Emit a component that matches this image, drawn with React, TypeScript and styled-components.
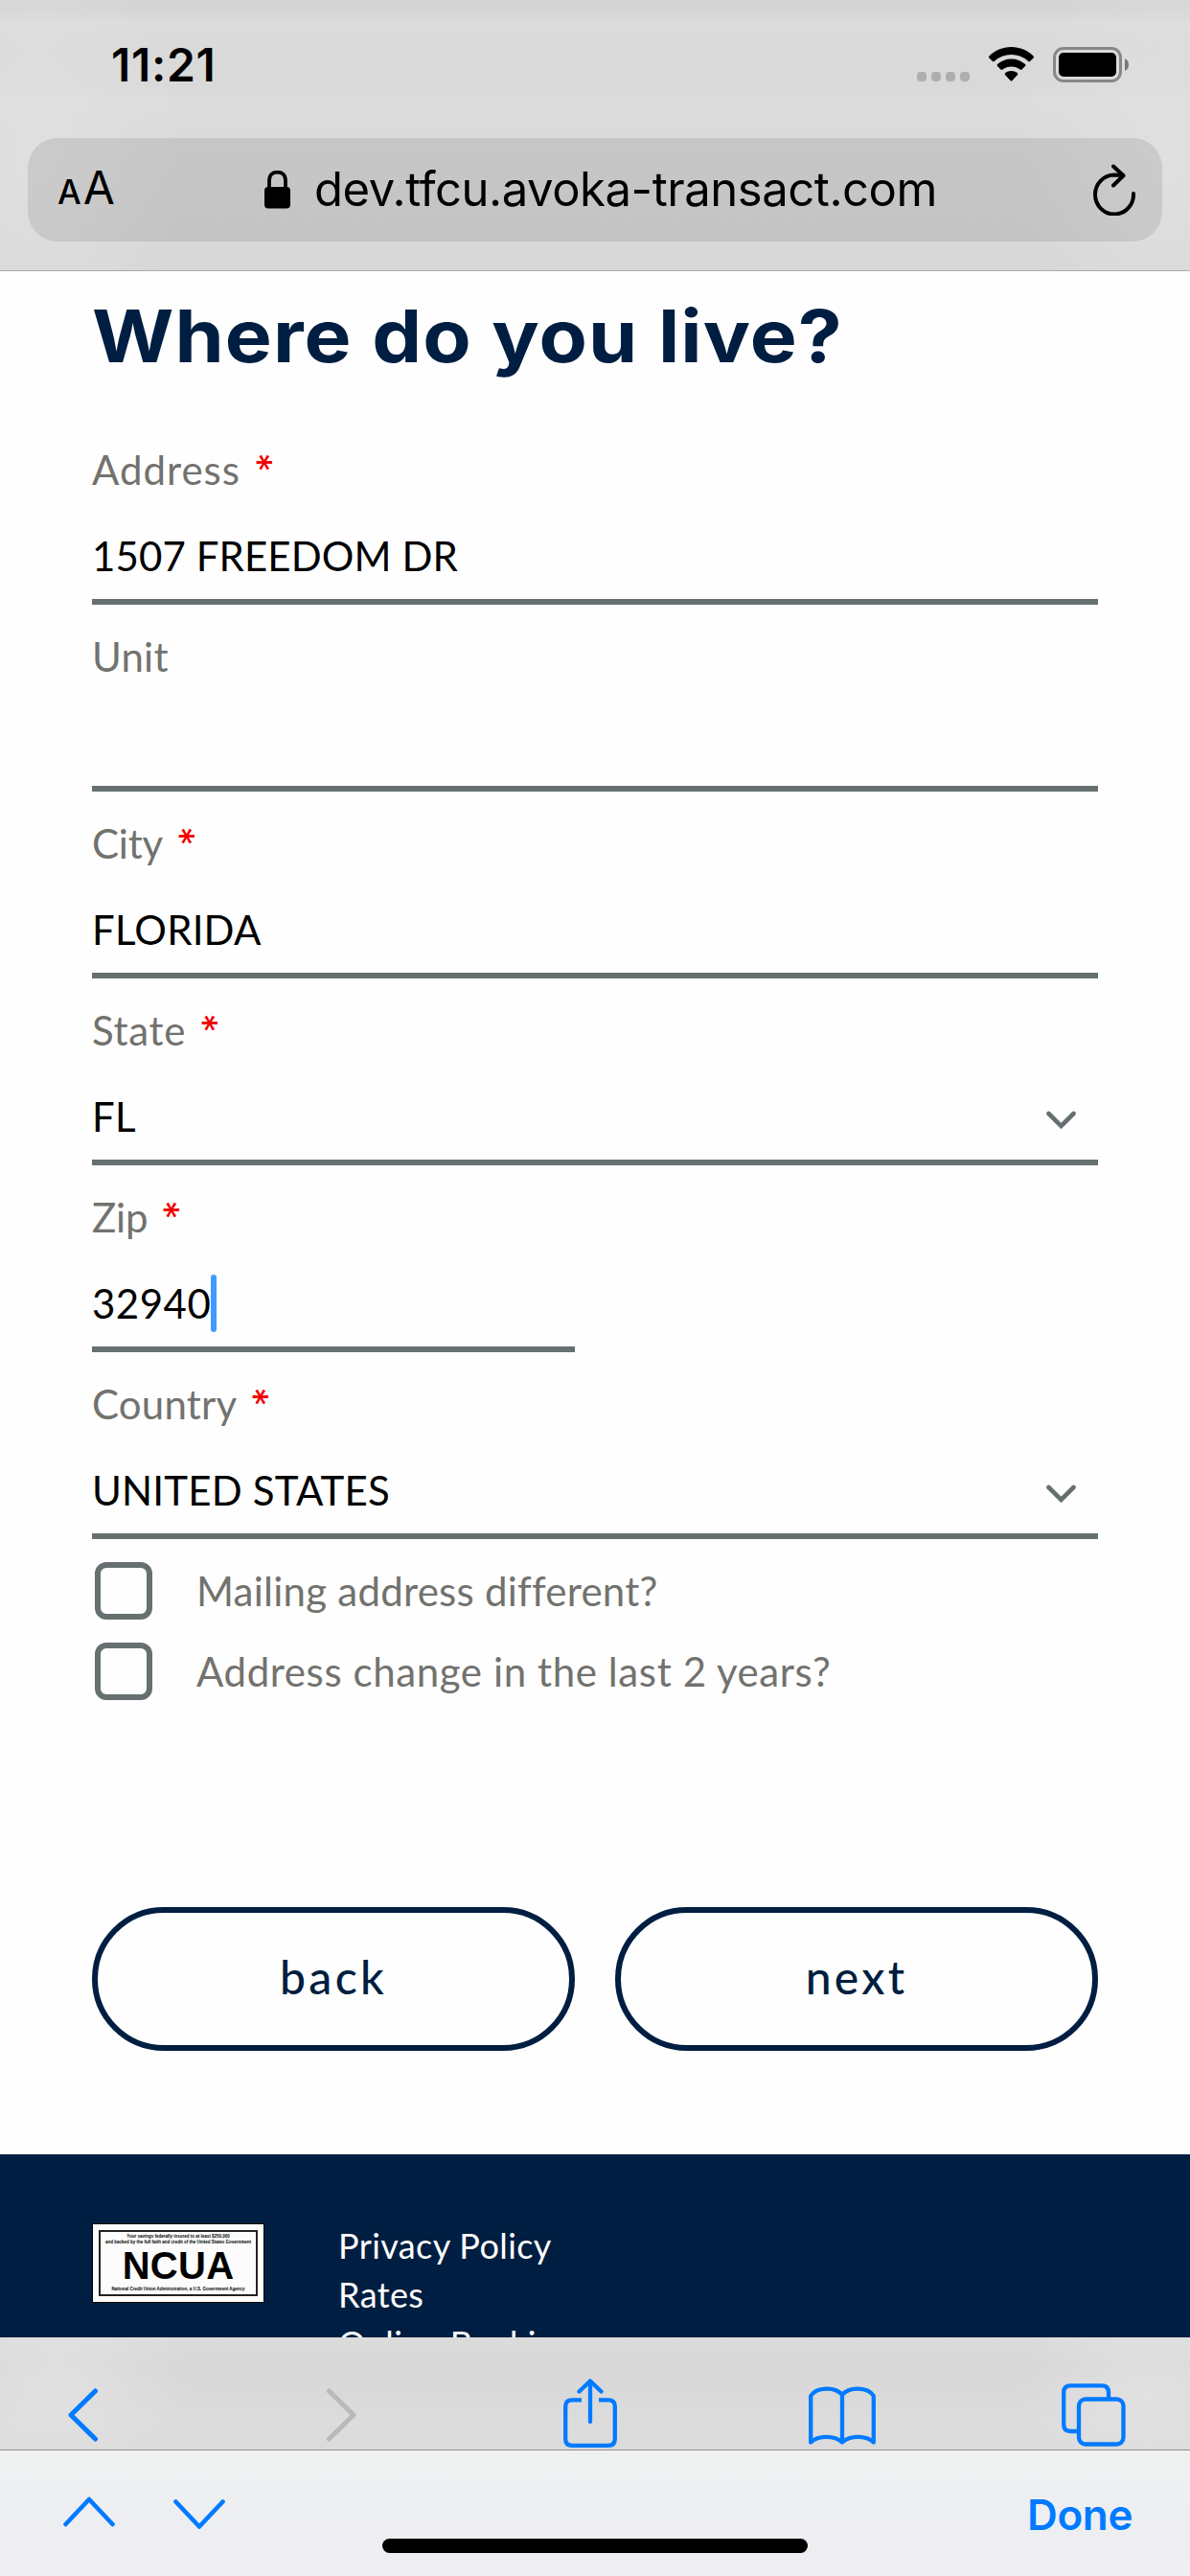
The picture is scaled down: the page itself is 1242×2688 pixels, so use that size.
import React from "react";
import styled, { createGlobalStyle } from "styled-components";

const navy = "#001e41";
const slate = "#667071";
const blue = "#007aff";

const GlobalStyle = createGlobalStyle`
  * { box-sizing: border-box; }
  body { margin: 0; background: #fefefe; }
`;

const Screen = styled.div`
  width: 1242px;
  height: 2688px;
  display: flex;
  flex-direction: column;
  overflow: hidden;
  background: #fefefe;
  font-family: Lato, "Open Sans", sans-serif;
`;

const BrowserTop = styled.header`
  height: 283px;
  flex: none;
  border-bottom: 1px solid #ababab;
  padding: 0 29px;
  background:
    radial-gradient(ellipse 150px 260px at 40px 60%, rgba(226, 226, 226, 0.7), transparent),
    radial-gradient(ellipse 150px 260px at 1215px 60%, rgba(226, 226, 226, 0.7), transparent),
    linear-gradient(#d4d4d4 0, #d5d5d5 12px, #dcdcdc 24px, #dadada 40px, #d9d9d9 90px, #dddddd 105px, #dbdbdb 130px, #d7d7d7 100%);
`;

const StatusBar = styled.div`
  height: 144px;
  padding: 49px 34px 0 87px;
  display: flex;
  justify-content: space-between;
  align-items: flex-start;
`;

const Clock = styled.time`
  font: 600 48px/38px Inter, sans-serif;
  letter-spacing: 0.7px;
  color: #000;
`;

const StatusIcons = styled.div`
  display: flex;
  height: 38px;
`;

const AddressBar = styled.div`
  height: 108px;
  border-radius: 31px;
  background: rgba(0, 0, 0, 0.09);
  padding: 0 27px 0 31px;
  display: flex;
  align-items: center;
  justify-content: space-between;
`;

const TextSize = styled.span`
  display: flex;
  align-items: baseline;
  gap: 2px;
  width: 61px;
  font: 400 48px/60px Inter, sans-serif;
  color: #000;
  small { font-size: 35px; font-weight: 500; }
`;

const Url = styled.div`
  display: flex;
  align-items: center;
  gap: 25px;
  margin-right: 8px;
  font: 400 49px/60px Inter, sans-serif;
  letter-spacing: -0.45px;
  color: #000;
`;

const Page = styled.main`
  height: 2156px;
  flex: none;
  overflow: hidden;
`;

const Form = styled.form`
  height: 1965px;
  padding: 17px 96px 0;
  display: flex;
  flex-direction: column;
`;

const Title = styled.h1`
  margin: 0 0 36px;
  font: 700 76px/100px Inter, sans-serif;
  letter-spacing: 1px;
  white-space: nowrap;
  transform: scaleX(1.083);
  transform-origin: 0 50%;
  color: ${navy};
`;

const FieldBox = styled.div<{ $half?: boolean }>`
  width: ${(p) => (p.$half ? "504px" : "100%")};
  height: 195px;
  flex: none;
  border-bottom: 6px solid ${slate};
  padding-top: 24px;
`;

const Label = styled.label<{ $track: number }>`
  display: flex;
  gap: 17px;
  height: 90px;
  font-size: 42px;
  line-height: 60px;
  letter-spacing: ${(p) => p.$track}px;
  color: #72726e;
`;

const Required = styled.span`
  width: 17px;
  height: 60px;
  display: flex;
  justify-content: center;
  font-family: Inter, sans-serif;
  font-size: 40px;
  font-weight: 400;
  letter-spacing: 0;
  color: #f20000;
  transform: rotate(90deg);
  transform-origin: 8.5px 22.4px;
`;

const ValueRow = styled.div`
  display: flex;
  align-items: center;
  height: 60px;
  padding-right: 23px;
  line-height: 60px;
  color: #000;
`;

const Value = styled.span<{ $track: number }>`
  font-size: 42px;
  letter-spacing: ${(p) => p.$track}px;
  white-space: nowrap;
`;

const Caret = styled.i`
  width: 6px;
  height: 60px;
  border-radius: 3px;
  background: #4299ff;
`;

const SelectArrow = styled.svg`
  margin: 7px 0 0 auto;
`;

const Check = styled.label<{ $track: number }>`
  display: flex;
  align-items: center;
  gap: 46px;
  height: 60px;
  margin: 0 0 24px 3px;
  font-size: 42px;
  line-height: 60px;
  letter-spacing: ${(p) => p.$track}px;
  white-space: nowrap;
  color: #72726e;
`;

const CheckList = styled.div`
  padding-top: 24px;
  height: 384px;
`;

const Box = styled.span`
  width: 60px;
  height: 60px;
  border: 6px solid ${slate};
  border-radius: 12px;
`;

const Actions = styled.div`
  display: grid;
  grid-template-columns: 1fr 1fr;
  gap: 42px;
`;

const PillButton = styled.button`
  height: 150px;
  border: 6px solid ${navy};
  border-radius: 75px;
  background: transparent;
  padding: 0 0 4px;
  font: 500 48px/60px Lato, sans-serif;
  letter-spacing: 3.3px;
  color: ${navy};
`;

const Footer = styled.footer`
  height: 300px;
  background: ${navy};
  padding: 72px 96px 0;
  display: flex;
  align-items: flex-start;
  gap: 77px;
`;

const Badge = styled.div`
  width: 180px;
  height: 83px;
  border: 1px solid #000;
  background: #fcfcfc;
  padding: 6px;
`;

const BadgeInner = styled.div`
  height: 69px;
  border: 2px solid #222;
  padding-top: 2px;
  display: flex;
  flex-direction: column;
  align-items: center;
  white-space: nowrap;
  font-family: "Liberation Sans", Arial, sans-serif;
  color: #000;
`;

const BadgeLine = styled.span<{ $size: number }>`
  font-size: ${(p) => p.$size}px;
  font-weight: 700;
  line-height: 6px;
`;

const BadgeName = styled.strong`
  font-size: 40px;
  line-height: 43px;
  letter-spacing: 0.3px;
`;

const Links = styled.nav`
  margin-top: -2px;
  display: flex;
  flex-direction: column;
  font-size: 36px;
  line-height: 51px;
  letter-spacing: 0.4px;
  white-space: nowrap;
  color: #fff;
`;

const Toolbar = styled.nav`
  height: 118px;
  flex: none;
  border-bottom: 1px solid #8f8f93;
  padding: 43px 67px 0;
  display: grid;
  grid-template-columns: 270px 250px 256px 264px 68px;
  align-items: start;
  background:
    radial-gradient(ellipse 140px 120px at 60px 40%, rgba(228, 228, 228, 0.7), transparent),
    radial-gradient(ellipse 140px 120px at 1200px 50%, rgba(228, 228, 228, 0.7), transparent),
    linear-gradient(#dcdcdc, #d7d7d7 25%, #dcdcdc 75%, #dbdbdb);
`;

const Accessory = styled.div`
  height: 131px;
  flex: none;
  background: linear-gradient(#f0f1f1, #edeef1 55%, #efeff2);
`;

const AccessoryRow = styled.div`
  height: 92px;
  padding: 46px 60px 0 66px;
  display: flex;
  justify-content: space-between;
  align-items: flex-start;
`;

const Arrows = styled.div`
  display: flex;
  gap: 61px;
`;

const Done = styled.span`
  font: 600 44px/42px Inter, sans-serif;
  letter-spacing: -0.4px;
  color: ${blue};
`;

const HomeIndicator = styled.div`
  width: 444px;
  height: 15px;
  margin: 0 auto;
  border-radius: 8px;
  background: #000;
`;

function DownChevron() {
  return (
    <SelectArrow width="32" height="20" viewBox="0 0 32 20" fill="none" stroke={slate} strokeWidth="4.6" strokeLinecap="round">
      <path d="M3.5 3 L16.5 16 L29.5 3" />
    </SelectArrow>
  );
}

interface FieldProps {
  label: string;
  labelTrack?: number;
  value?: string;
  required?: boolean;
  select?: boolean;
  half?: boolean;
  focused?: boolean;
  track?: number;
}

function Field({ label, labelTrack = 0.2, value, required, select, half, focused, track = 0.2 }: FieldProps) {
  return (
    <FieldBox $half={half}>
      <Label $track={labelTrack}>
        {label}
        {required && <Required>*</Required>}
      </Label>
      <ValueRow>
        <Value $track={track}>{value}</Value>
        {focused && <Caret />}
        {select && <DownChevron />}
      </ValueRow>
    </FieldBox>
  );
}

export default function App() {
  return (
    <Screen>
      <GlobalStyle />
      <BrowserTop>
        <StatusBar>
          <Clock>11:21</Clock>
          <StatusIcons>
            <svg width="222" height="38" viewBox="957 49 222 38">
              <g fill="#aeaeae">
                <rect x="957" y="75" width="10" height="10" rx="4" />
                <rect x="972" y="75" width="10" height="10" rx="4" />
                <rect x="987" y="75" width="10" height="10" rx="4" />
                <rect x="1002" y="75" width="10" height="10" rx="4" />
              </g>
              <path d="M1055.5 49 C1064.500 49 1072.500 52.500 1078.600 58.500 Q1079.500 59.500 1078.600 60.500 L1075 64 Q1074.200 64.700 1073.300 63.900 A26.500 26.500 0 0 0 1037.700 63.900 Q1036.800 64.700 1036 64 L1032.400 60.500 Q1031.500 59.500 1032.400 58.500 C1038.500 52.500 1046.500 49 1055.500 49Z" />
              <path d="M1055.500 61.500 C1061 61.500 1066 63.500 1070 67 Q1071 68 1070 69 L1066.500 72.600 Q1065.600 73.400 1064.600 72.600 A14.500 14.500 0 0 0 1046.400 72.600 Q1045.400 73.400 1044.500 72.600 L1041 69 Q1040 68 1041 67 C1045 63.500 1050 61.500 1055.500 61.500Z" />
              <path d="M1055.500 74 C1058 74 1060 74.700 1061.800 76.100 Q1062.800 77 1061.800 78.200 L1056.500 84 Q1055.500 85 1054.500 84 L1049.200 78.200 Q1048.200 77 1049.200 76.100 C1051 74.700 1053 74 1055.500 74Z" />
              <rect x="1100.500" y="50.500" width="69" height="34" rx="9.500" fill="none" stroke="#878787" strokeWidth="3" />
              <rect x="1105" y="55" width="60" height="25" rx="5" />
              <path d="M1174 61 Q1178 63 1178 67.500 Q1178 72 1174 74Z" fill="#777" />
            </svg>
          </StatusIcons>
        </StatusBar>
        <AddressBar>
          <TextSize>
            <small>A</small>A
          </TextSize>
          <Url>
            <svg width="27" height="40" viewBox="0 0 27 40">
              <rect x="0" y="17" width="27" height="22.500" rx="4" />
              <path d="M5 19 V10.500 C5 4.500 8.500 1.700 13.500 1.700 C18.500 1.700 22 4.500 22 10.500 V19" fill="none" stroke="#000" strokeWidth="3.700" />
            </svg>
            dev.tfcu.avoka-transact.com
          </Url>
          <svg width="45" height="54" viewBox="0 0 45 54" fill="none" stroke="#000" strokeWidth="4" strokeLinecap="round" strokeLinejoin="round">
            <path d="M42 31 A20 20.500 0 1 1 22 11.500 L31 12" />
            <path d="M21 2.500 L31.500 12.300 L21 22.500" />
          </svg>
        </AddressBar>
      </BrowserTop>

      <Page>
        <Form>
          <Title>Where do you live?</Title>
          <Field label="Address" labelTrack={1} required value="1507 FREEDOM DR" track={0.1} />
          <Field label="Unit" />
          <Field label="City" labelTrack={-0.2} required value="FLORIDA" />
          <Field label="State" labelTrack={0.7} required select value="FL" />
          <Field label="Zip" labelTrack={-0.2} required half focused value="32940" track={0.5} />
          <Field label="Country" required select value="UNITED STATES" />
          <CheckList>
            <Check $track={0.25}>
              <Box />
              Mailing address different?
            </Check>
            <Check $track={0.6}>
              <Box />
              Address change in the last 2 years?
            </Check>
          </CheckList>
          <Actions>
            <PillButton type="button">back</PillButton>
            <PillButton type="button">next</PillButton>
          </Actions>
        </Form>
        <Footer>
          <Badge>
            <BadgeInner>
              <BadgeLine $size={4.5}>Your savings federally insured to at least $250,000</BadgeLine>
              <BadgeLine $size={4.5}>and backed by the full faith and credit of the United States Government</BadgeLine>
              <BadgeName>NCUA</BadgeName>
              <BadgeLine $size={4.5}>National Credit Union Administration, a U.S. Government Agency</BadgeLine>
            </BadgeInner>
          </Badge>
          <Links>
            <span>Privacy Policy</span>
            <span>Rates</span>
            <span>Online Banking</span>
          </Links>
        </Footer>
      </Page>

      <Toolbar>
        <svg width="39" height="74" viewBox="67 2482 39 74" fill="none" stroke={blue} strokeWidth="5" strokeLinecap="round" strokeLinejoin="round">
          <path d="M99.500 2495 L74 2520 L99.500 2545" />
        </svg>
        <svg width="39" height="74" viewBox="337 2482 39 74" fill="none" stroke="#b9b9b9" strokeWidth="5" strokeLinecap="round" strokeLinejoin="round">
          <path d="M343.500 2495 L369 2520 L343.500 2545" />
        </svg>
        <svg width="58" height="74" viewBox="587 2482 58 74" fill="none" stroke={blue} strokeWidth="4.300" strokeLinecap="round" strokeLinejoin="round">
          <path strokeLinecap="butt" d="M607 2504.300 H597 Q590.200 2504.300 590.200 2511 V2545 Q590.200 2551.800 597 2551.800 H635 Q641.800 2551.800 641.800 2545 V2511 Q641.800 2504.300 635 2504.300 H625" />
          <path d="M616 2527 V2485 M604.500 2495.500 L616 2484.500 L627.500 2495.500" />
        </svg>
        <svg width="72" height="74" viewBox="843 2482 72 74" fill="none" stroke={blue} strokeWidth="4.300" strokeLinecap="round" strokeLinejoin="round">
          <path d="M846.200 2548.500 V2500 C852 2490.500 872 2490 879 2499 C886 2490 906 2490.500 911.800 2500 V2548.500 C904 2541 887 2541 879 2548.500 C871 2541 854 2541 846.200 2548.500Z M879 2499 V2548.500" />
        </svg>
        <svg width="68" height="74" viewBox="1107 2482 68 74" fill="none" stroke={blue} strokeWidth="4.300">
          <path d="M1124 2537 H1117.500 Q1110.200 2537 1110.200 2530 V2496.500 Q1110.200 2489.300 1117.500 2489.300 H1150 Q1157 2489.300 1157 2496.500 V2503" />
          <rect x="1126" y="2503.500" width="46.500" height="47" rx="7" />
        </svg>
      </Toolbar>
      <Accessory>
        <AccessoryRow>
          <Arrows>
            <svg width="54" height="38" viewBox="66 2603 54 38" fill="none" stroke={blue} strokeWidth="4.600" strokeLinecap="round" strokeLinejoin="round">
              <path d="M68.500 2634 L93 2608 L117.500 2634" />
            </svg>
            <svg width="54" height="38" viewBox="181 2603 54 38" fill="none" stroke={blue} strokeWidth="4.600" strokeLinecap="round" strokeLinejoin="round">
              <path d="M183.500 2610.500 L208 2636.500 L232.500 2610.500" />
            </svg>
          </Arrows>
          <Done>Done</Done>
        </AccessoryRow>
        <HomeIndicator />
      </Accessory>
    </Screen>
  );
}
